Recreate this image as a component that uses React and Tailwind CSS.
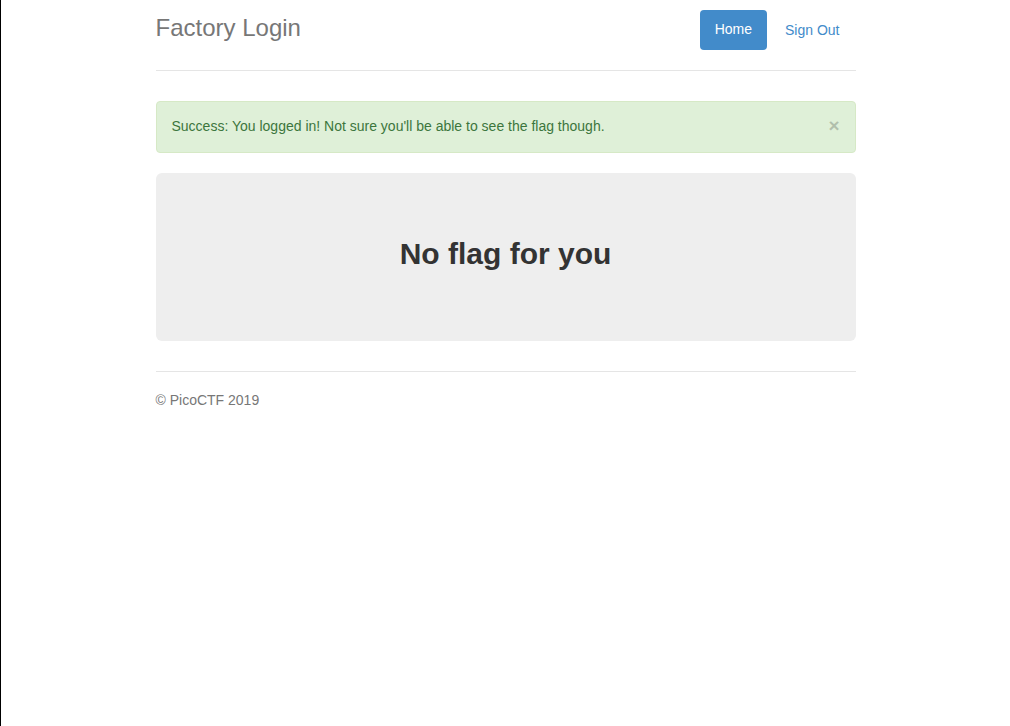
export default function App() {
  return (
    <div
      className="min-h-[726px] border-l border-black bg-white text-[14px] leading-[20px] text-[#333]"
      style={{ fontFamily: '"Liberation Sans", Arial, Helvetica, sans-serif' }}
    >
      <div className="mx-auto w-[730px] px-[15px] pt-[10px]">
        <div className="flex items-center justify-between border-b border-[#e5e5e5] pb-[20px]">
          <h3 className="m-0 pb-[4px] text-[24px] leading-[36px] text-[#777]">Factory Login</h3>
          <ul className="mr-[1px] flex">
            <li>
              <a className="block rounded-[4px] bg-[#428bca] px-[15px] pt-[9px] pb-[11px] text-white">Home</a>
            </li>
            <li className="ml-[3px]">
              <a className="block px-[15px] py-[10px] text-[#428bca]">Sign Out</a>
            </li>
          </ul>
        </div>

        <div className="mt-[30px] mb-[20px] flex items-center justify-between rounded-[4px] border border-[#d6e9c6] bg-[#dff0d8] pt-[14px] pb-[16px] pl-[15px] pr-[15px] text-[#3c763d]">
          <span>Success: You logged in! Not sure you'll be able to see the flag though.</span>
          <span className="text-[19px] font-bold leading-[20px] text-black opacity-20">×</span>
        </div>

        <div className="mb-[30px] rounded-[6px] bg-[#eeeeee] py-[48px] text-center">
          <h2 className="mt-[16px] mb-[23px] text-[30px] font-bold leading-[33px] text-[#333]">No flag for you</h2>
        </div>

        <footer className="border-t border-[#e5e5e5] pt-[18px] text-[#777]">
          <p>© PicoCTF 2019</p>
        </footer>
      </div>
    </div>
  );
}
